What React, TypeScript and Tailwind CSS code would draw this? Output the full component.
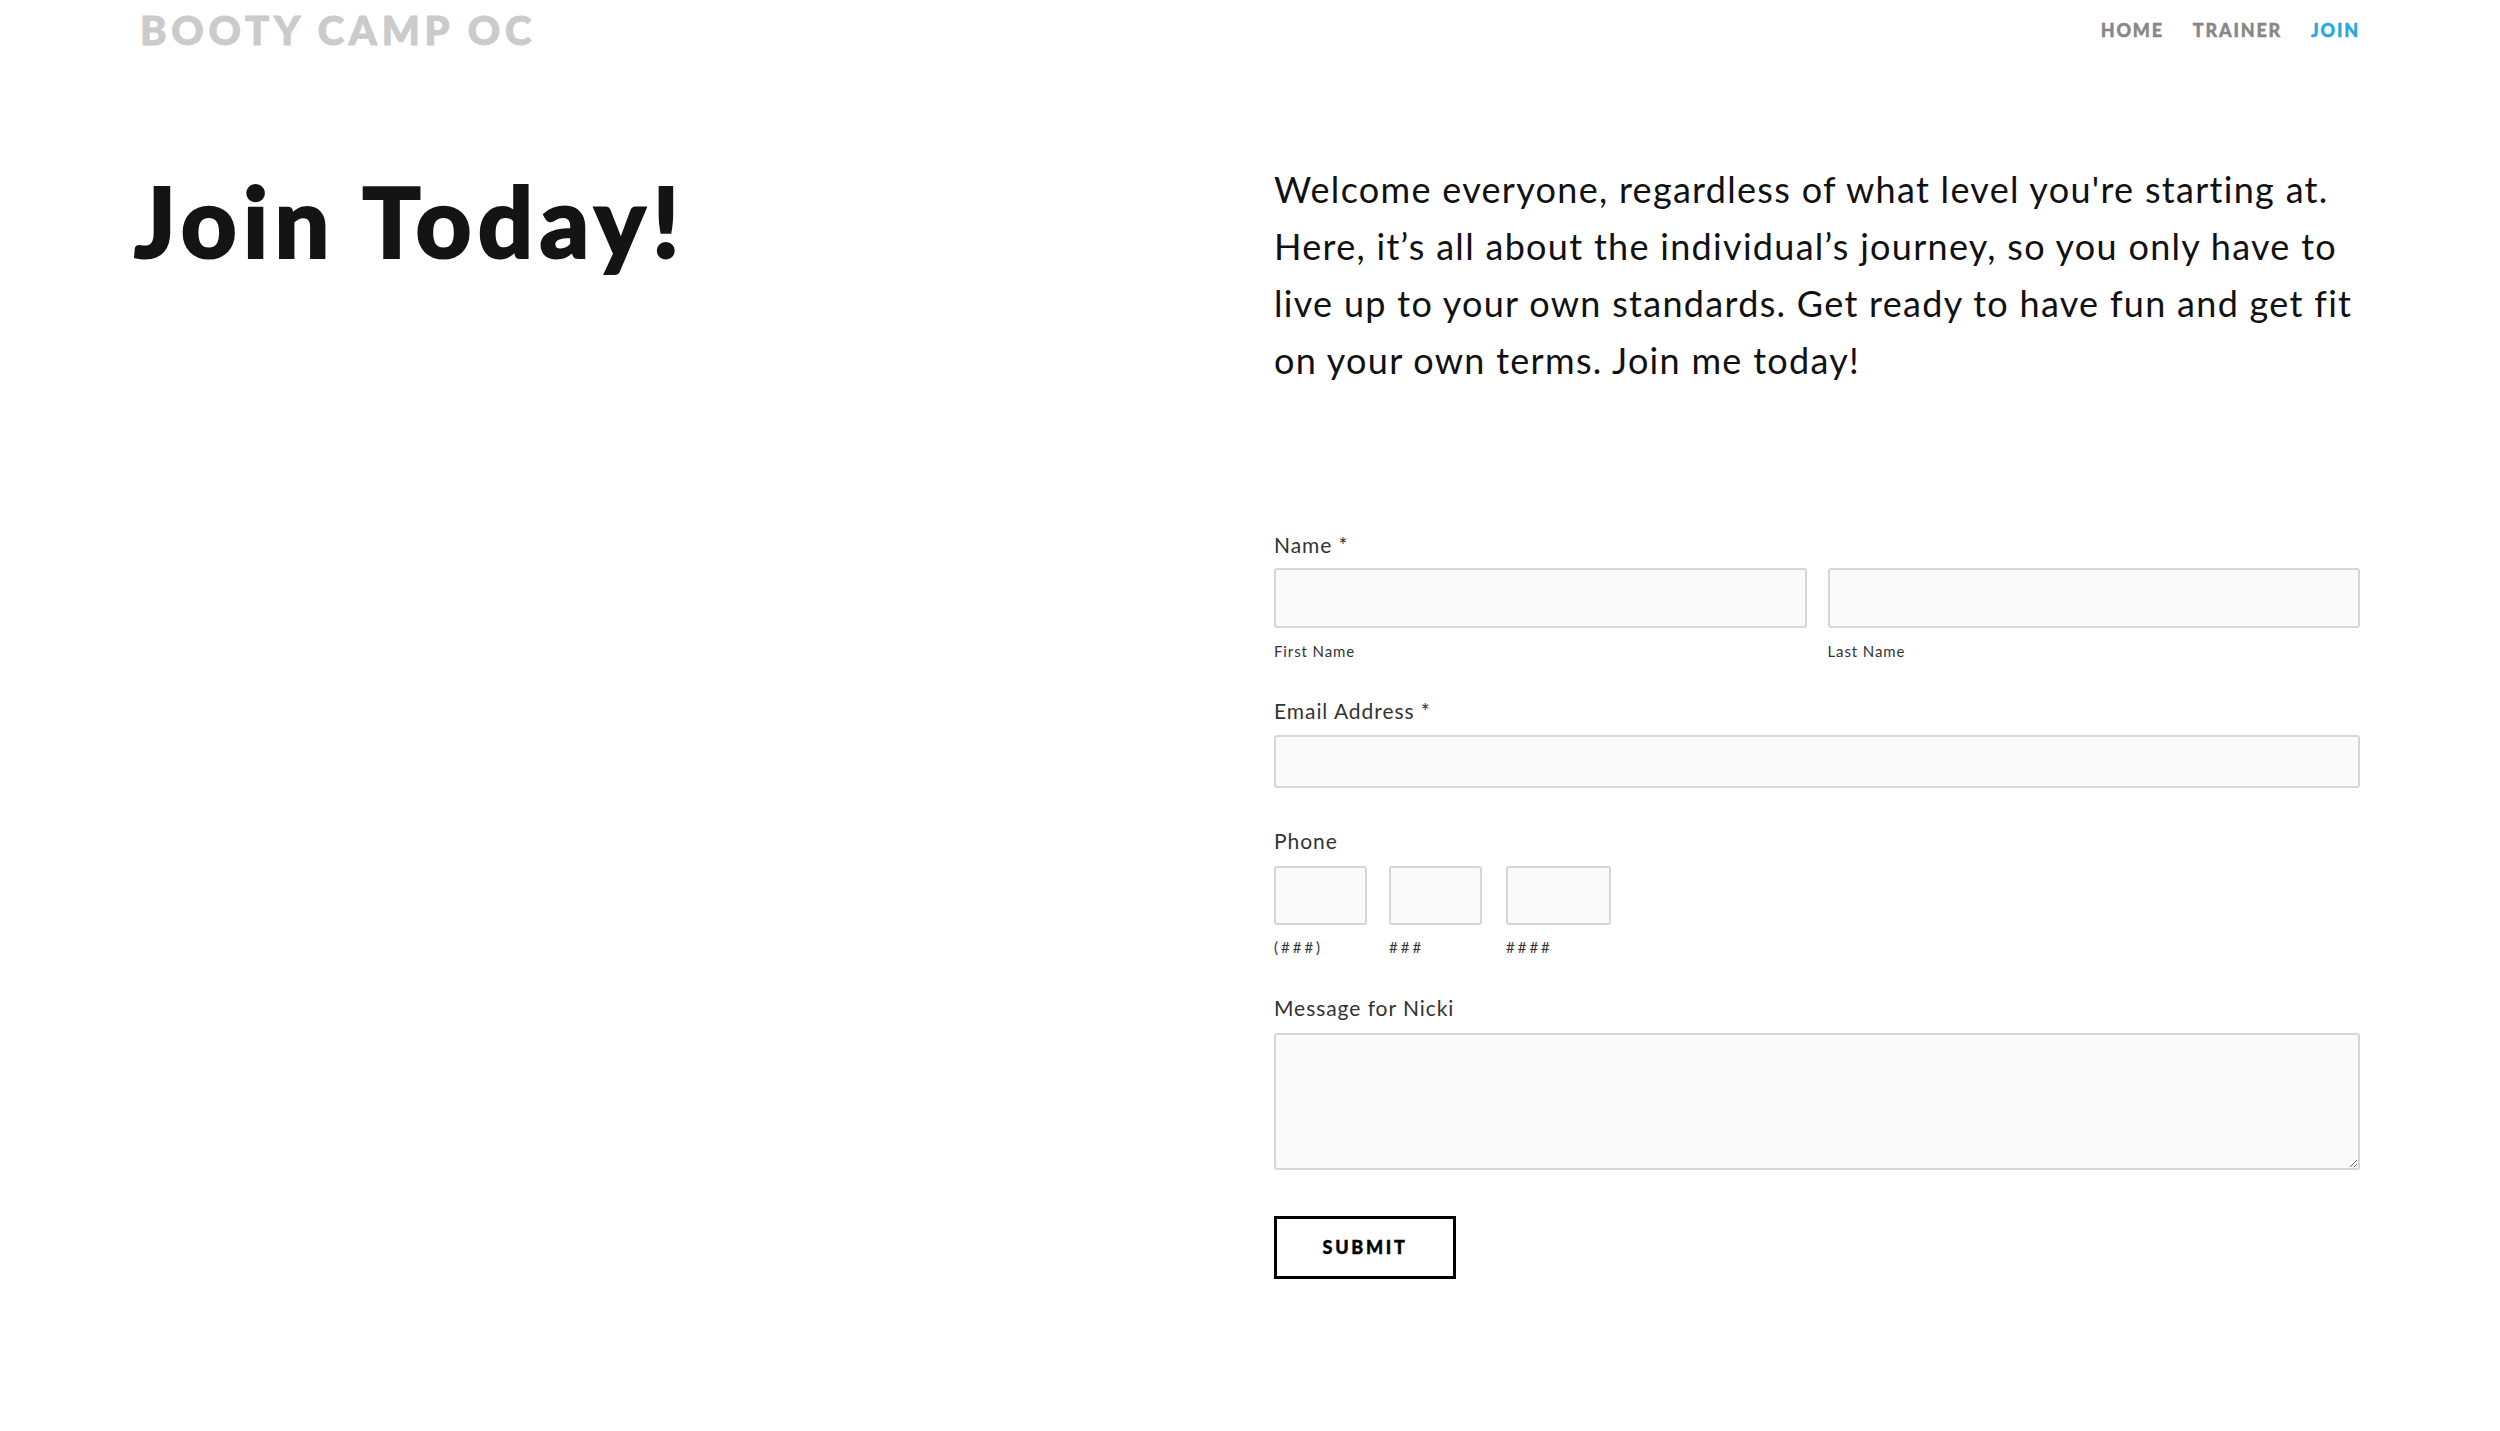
import React from "react";

const inputCls =
  "block w-full h-full bg-[#fafafa] border-2 border-[#d6d6d6] rounded-[3px] outline-none";

function Label({ children }: { children: React.ReactNode }) {
  return (
    <div className="text-[21px] leading-[24px] tracking-[0.045em] text-[#333]">{children}</div>
  );
}

function Sub({ children }: { children: React.ReactNode }) {
  return (
    <div className="mt-[14px] text-[15px] leading-[18px] tracking-[0.06em] text-[#333]">
      {children}
    </div>
  );
}

export default function App() {
  return (
    <div className="min-h-[1431px] bg-white text-[#111]" style={{ fontFamily: "Lato, 'Open Sans', sans-serif" }}>
      <header className="flex items-start justify-between h-[70px] pl-[140px] pr-[140px]">
        <div className="pt-[10px] text-[40px] leading-none font-black tracking-[0.12em] text-[#cbcbcb] [-webkit-text-stroke:1px_#cbcbcb]">
          BOOTY CAMP OC
        </div>
        <nav className="flex gap-[29px] pt-[21px] text-[18px] leading-none font-black tracking-[0.1em] [-webkit-text-stroke:0.4px_currentColor]">
          <span className="text-[#878787]">HOME</span>
          <span className="text-[#878787]">TRAINER</span>
          <span className="text-[#2aa6e6]">JOIN</span>
        </nav>
      </header>

      <main className="flex pl-[134px] pr-[140px]">
        <div className="w-[1140px] shrink-0">
          <h1 className="mt-[102px] text-[97px] leading-none font-black tracking-[0.065em] text-[#141414] [-webkit-text-stroke:2px_#141414]">
            Join Today!
          </h1>
        </div>

        <div className="flex-1">
          <p className="mt-[91px] text-[36px] leading-[57px] tracking-[0.036em] text-[#111] whitespace-nowrap">
            Welcome everyone, regardless of what level you're starting at.
            <br />
            Here, it’s all about the individual’s journey, so you only have to
            <br />
            live up to your own standards. Get ready to have fun and get fit
            <br />
            on your own terms. Join me today!
          </p>

          <form className="mt-[144px]" onSubmit={(e) => e.preventDefault()}>
            <Label>Name *</Label>
            <div className="mt-[11px] flex gap-[21px]">
              <div className="flex-1">
                <div className="h-[60px]">
                  <input className={inputCls} />
                </div>
                <Sub>First Name</Sub>
              </div>
              <div className="flex-1">
                <div className="h-[60px]">
                  <input className={inputCls} />
                </div>
                <Sub>Last Name</Sub>
              </div>
            </div>

            <div className="mt-[39px]">
              <Label>Email Address *</Label>
              <div className="mt-[12px] h-[53px]">
                <input className={inputCls} />
              </div>
            </div>

            <div className="mt-[41px]">
              <Label>Phone</Label>
              <div className="mt-[13px] flex">
                <div className="w-[93px]">
                  <div className="h-[59px]">
                    <input className={inputCls} />
                  </div>
                  <div className="mt-[13px] text-[15px] leading-[18px] tracking-[0.2em] text-[#333]">(###)</div>
                </div>
                <div className="ml-[22px] w-[93px]">
                  <div className="h-[59px]">
                    <input className={inputCls} />
                  </div>
                  <div className="mt-[13px] text-[15px] leading-[18px] tracking-[0.2em] text-[#333]">###</div>
                </div>
                <div className="ml-[24px] w-[105px]">
                  <div className="h-[59px]">
                    <input className={inputCls} />
                  </div>
                  <div className="mt-[13px] text-[15px] leading-[18px] tracking-[0.2em] text-[#333]">####</div>
                </div>
              </div>
            </div>

            <div className="mt-[40px]">
              <Label>Message for Nicki</Label>
              <div className="mt-[13px] h-[137px]">
                <textarea className={inputCls + " resize-y"} />
              </div>
            </div>

            <button
              type="submit"
              className="mt-[46px] w-[182px] h-[63px] border-[3px] border-black bg-white text-[18px] font-black tracking-[0.15em] text-black [-webkit-text-stroke:0.4px_#000]"
            >
              SUBMIT
            </button>
          </form>
        </div>
      </main>
    </div>
  );
}
